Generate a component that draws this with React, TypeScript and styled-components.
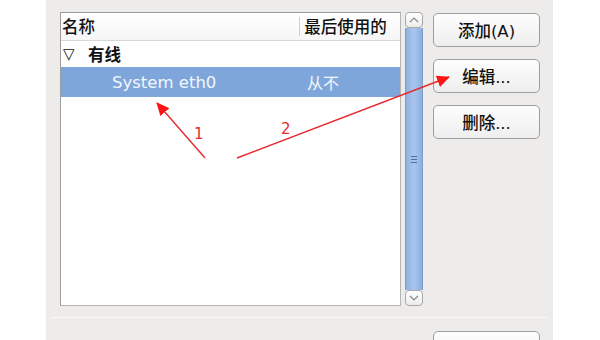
import React from 'react';
import styled, { createGlobalStyle } from 'styled-components';

const GlobalStyle = createGlobalStyle`
  html, body {
    margin: 0;
    padding: 0;
    background: #ffffff;
  }
  body {
    font-family: 'DejaVu Sans', 'Noto Sans CJK SC', sans-serif;
  }
`;

type Connection = {
  id: number;
  name: string;
  lastUsed: string;
};

const connections: Connection[] = [{ id: 1, name: 'System eth0', lastUsed: '从不' }];

const App: React.FC = () => {
  return (
    <Page>
      <GlobalStyle />
      <Panel>
        <TopRow>
          <ListBox>
            <HeaderRow>
              <HeaderCell>名称</HeaderCell>
              <HeaderCell $divider>最后使用的</HeaderCell>
            </HeaderRow>
            <GroupRow>
              <Triangle>▽</Triangle>
              有线
            </GroupRow>
            {connections.map((c) => (
              <ItemRow key={c.id} $selected>
                <ItemName>{c.name}</ItemName>
                <ItemUsed>{c.lastUsed}</ItemUsed>
              </ItemRow>
            ))}
          </ListBox>
          <ScrollBar>
            <ScrollButton>
              <svg width="10" height="6" viewBox="0 0 10 6">
                <path d="M1 5 L5 1 L9 5" fill="none" stroke="#8a8a8a" strokeWidth="1.2" />
              </svg>
            </ScrollButton>
            <Thumb>
              <Grip />
              <Grip />
              <Grip />
            </Thumb>
            <ScrollButton>
              <svg width="10" height="6" viewBox="0 0 10 6">
                <path d="M1 1 L5 5 L9 1" fill="none" stroke="#8a8a8a" strokeWidth="1.2" />
              </svg>
            </ScrollButton>
          </ScrollBar>
          <ButtonColumn>
            <Button>添加(A)</Button>
            <Button>编辑...</Button>
            <Button>删除...</Button>
          </ButtonColumn>
        </TopRow>
        <Separator />
        <Footer>
          <Button>关闭(C)</Button>
        </Footer>
      </Panel>
      <Annotations width="600" height="340" viewBox="0 0 600 340">
        <defs>
          <marker id="head" markerWidth="13" markerHeight="12" refX="12" refY="6" orient="auto" markerUnits="userSpaceOnUse">
            <path d="M0 0 L13 6 L0 12 Z" fill="#ff1414" />
          </marker>
        </defs>
        <line x1="205" y1="158" x2="157" y2="103" stroke="#e62a30" strokeWidth="1.4" markerEnd="url(#head)" />
        <line x1="237" y1="158" x2="449" y2="77" stroke="#e62a30" strokeWidth="1.4" markerEnd="url(#head)" />
        <AnnotationText x="194" y="139">1</AnnotationText>
        <AnnotationText x="281" y="134">2</AnnotationText>
      </Annotations>
    </Page>
  );
};

const Page = styled.div`
  position: relative;
  width: 600px;
  height: 340px;
  overflow: hidden;
  background: #ffffff;
`;

const Panel = styled.div`
  margin-left: 46px;
  width: 507px;
  height: 340px;
  background: #edeceb;
  box-sizing: border-box;
  padding-top: 12px;
  display: flex;
  flex-direction: column;
`;

const TopRow = styled.div`
  display: flex;
  align-items: flex-start;
  padding-left: 14px;
`;

const ListBox = styled.div`
  width: 341px;
  height: 294px;
  box-sizing: border-box;
  background: #ffffff;
  border: 1px solid #b4b4b4;
  border-top-color: #9c9c9c;
  border-left-color: #9c9c9c;
`;

const HeaderRow = styled.div`
  display: flex;
  height: 27px;
  align-items: center;
  border-bottom: 1px solid #d8d8d8;
  background: linear-gradient(#ffffff, #f6f6f6);
`;

const HeaderCell = styled.div<{ $divider?: boolean }>`
  font-family: 'Noto Sans CJK SC', sans-serif;
  font-size: 16.5px;
  font-weight: 500;
  color: #111111;
  height: 27px;
  line-height: 27px;
  box-sizing: border-box;
  ${(p) =>
    p.$divider
      ? `
    width: 101px;
    padding-left: 5px;
    position: relative;
    &::before {
      content: '';
      position: absolute;
      left: 0;
      top: 4px;
      bottom: 4px;
      border-left: 1px solid #cfcfcf;
    }
  `
      : `
    width: 239px;
    padding-left: 1px;
  `}
`;

const GroupRow = styled.div`
  height: 26px;
  display: flex;
  align-items: center;
  padding-left: 2px;
  font-family: 'Noto Sans CJK SC', sans-serif;
  font-weight: 700;
  font-size: 16.5px;
  color: #111111;
`;

const Triangle = styled.span`
  font-family: 'DejaVu Sans', sans-serif;
  font-weight: 400;
  font-size: 15px;
  width: 25px;
`;

const ItemRow = styled.div<{ $selected?: boolean }>`
  height: 30px;
  display: flex;
  align-items: center;
  background: ${(p) => (p.$selected ? '#7fa6da' : 'transparent')};
  color: ${(p) => (p.$selected ? '#f2f6fc' : '#1a1a1a')};
`;

const ItemName = styled.span`
  width: 246px;
  padding-left: 51px;
  box-sizing: border-box;
  font-family: 'DejaVu Sans', sans-serif;
  font-size: 16.5px;
`;

const ItemUsed = styled.span`
  font-family: 'Noto Sans CJK SC', sans-serif;
  font-size: 16px;
`;

const ScrollBar = styled.div`
  margin-left: 4px;
  width: 18px;
  height: 294px;
  display: flex;
  flex-direction: column;
`;

const ScrollButton = styled.div`
  height: 16px;
  box-sizing: border-box;
  background: linear-gradient(#ffffff, #ececec);
  border: 1px solid #a8a8a8;
  border-radius: 4px;
  display: flex;
  align-items: center;
  justify-content: center;
`;

const Thumb = styled.div`
  flex: 1;
  background: linear-gradient(90deg, #8fb2e0, #a9c6ee 50%, #8cafdc);
  border-left: 1px solid #7e9ec8;
  border-right: 1px solid #7e9ec8;
  display: flex;
  flex-direction: column;
  align-items: center;
  justify-content: center;
  gap: 2px;
`;

const Grip = styled.div`
  width: 6px;
  height: 1px;
  background: #4f6f9c;
`;

const ButtonColumn = styled.div`
  margin-left: 10px;
  margin-top: 1px;
  display: flex;
  flex-direction: column;
  gap: 12px;
`;

const Button = styled.div`
  width: 107px;
  height: 34px;
  box-sizing: border-box;
  border: 1px solid #9e9e9e;
  border-radius: 5px;
  background: linear-gradient(#fdfdfd, #eeeeee);
  display: flex;
  align-items: center;
  justify-content: center;
  font-family: 'DejaVu Sans', 'Noto Sans CJK SC', sans-serif;
  font-size: 16.5px;
  font-weight: 500;
  color: #111111;
`;

const Separator = styled.div`
  margin: 11px 5px 0 5px;
  height: 1px;
  background: #c9c9c9;
  border-bottom: 1px solid #f8f8f8;
`;

const Footer = styled.div`
  display: flex;
  justify-content: flex-end;
  padding: 13px 13px 0 0;
`;

const Annotations = styled.svg`
  position: absolute;
  left: 0;
  top: 0;
  pointer-events: none;
`;

const AnnotationText = styled.text`
  font-family: 'DejaVu Sans', sans-serif;
  font-size: 15px;
  fill: #e62a30;
`;

export default App;
